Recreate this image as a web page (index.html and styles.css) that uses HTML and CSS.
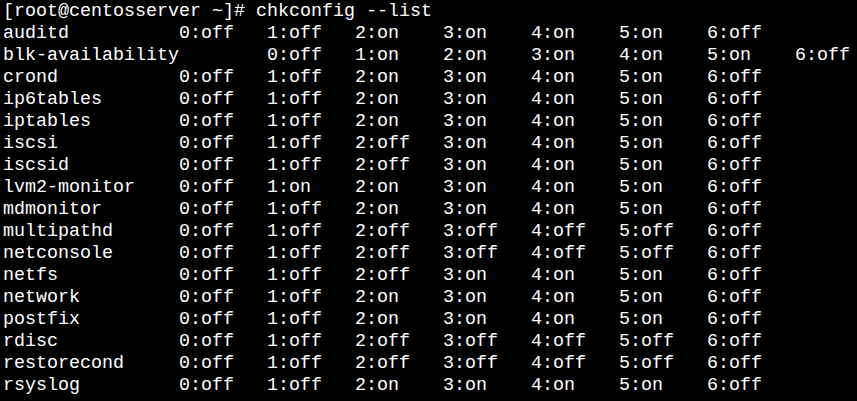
FILE: index.html
```html
<!DOCTYPE html>
<html>
<head>
<meta charset="utf-8">
<link rel="stylesheet" href="styles.css">
</head>
<body>
<pre class="term">[root@centosserver ~]# chkconfig --list
auditd         	0:off	1:off	2:on	3:on	4:on	5:on	6:off
blk-availability	0:off	1:on	2:on	3:on	4:on	5:on	6:off
crond          	0:off	1:off	2:on	3:on	4:on	5:on	6:off
ip6tables      	0:off	1:off	2:on	3:on	4:on	5:on	6:off
iptables       	0:off	1:off	2:on	3:on	4:on	5:on	6:off
iscsi          	0:off	1:off	2:off	3:on	4:on	5:on	6:off
iscsid         	0:off	1:off	2:off	3:on	4:on	5:on	6:off
lvm2-monitor   	0:off	1:on	2:on	3:on	4:on	5:on	6:off
mdmonitor      	0:off	1:off	2:on	3:on	4:on	5:on	6:off
multipathd     	0:off	1:off	2:off	3:off	4:off	5:off	6:off
netconsole     	0:off	1:off	2:off	3:off	4:off	5:off	6:off
netfs          	0:off	1:off	2:off	3:on	4:on	5:on	6:off
network        	0:off	1:off	2:on	3:on	4:on	5:on	6:off
postfix        	0:off	1:off	2:on	3:on	4:on	5:on	6:off
rdisc          	0:off	1:off	2:off	3:off	4:off	5:off	6:off
restorecond    	0:off	1:off	2:off	3:off	4:off	5:off	6:off
rsyslog        	0:off	1:off	2:on	3:on	4:on	5:on	6:off</pre>
</body>
</html>
```
FILE: styles.css
```css
html, body {
  margin: 0;
  padding: 0;
  background: #000;
  width: 857px;
  height: 401px;
  overflow: hidden;
}
.term {
  margin: 0;
  padding: 1px 0 0 3px;
  font-family: "Liberation Mono", "Courier New", monospace;
  font-size: 18.33px;
  line-height: 22px;
  color: #ffffff;
  white-space: pre;
  tab-size: 8;
  -moz-tab-size: 8;
}
```
